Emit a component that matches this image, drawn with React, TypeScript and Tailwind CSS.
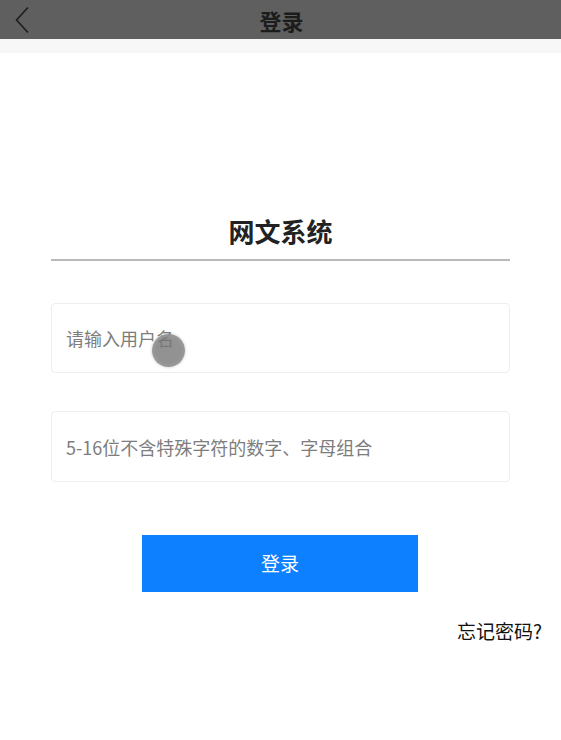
import React from 'react';

const font = { fontFamily: '"Noto Sans CJK SC", "Noto Sans", sans-serif' };

export default function App() {
  return (
    <div className="relative w-[561px] h-[740px] bg-white overflow-hidden" style={font}>
      {/* Header */}
      <div className="relative h-[39px] bg-[#5f5f5f] flex items-center justify-center">
        <button className="absolute left-[13px] top-[6px] w-[18px] h-[27px] flex items-center justify-center">
          <svg width="14" height="26" viewBox="0 0 14 26" fill="none">
            <path d="M12.5 1 L1.5 13 L12.5 25" stroke="#1c1c1c" strokeWidth="1.6" strokeLinecap="round" strokeLinejoin="round" />
          </svg>
        </button>
        <h1 className="ml-[2px] text-[22px] font-bold text-[#1c1c1c] leading-none">登录</h1>
      </div>
      <div className="h-[14px] bg-[#f7f7f7]" />

      <div className="px-[51px]">
        {/* Title */}
        <div className="mt-[160px] pb-[10px] border-b-2 border-[#bababa]">
          <h2 className="h-[36px] leading-[36px] text-center text-[26px] font-bold text-[#222]">网文系统</h2>
        </div>

        {/* Inputs */}
        <input
          className="mt-[42px] block w-full h-[70px] px-[14px] border border-[#eeeeee] rounded-[4px] text-[18px] text-[#333] placeholder:text-[#7d7d7d] outline-none"
          placeholder="请输入用户名"
        />
        <input
          type="password"
          className="mt-[38px] block w-full h-[71px] px-[14px] border border-[#eeeeee] rounded-[4px] text-[18px] text-[#333] placeholder:text-[#7d7d7d] outline-none"
          placeholder="5-16位不含特殊字符的数字、字母组合"
        />
      </div>

      {/* Submit */}
      <div className="mt-[53px] flex justify-center">
        <button className="ml-[-1px] w-[276px] h-[57px] bg-[#0c80fe] text-white text-[19px]">登录</button>
      </div>

      <div className="mt-[25px] pr-[19px] flex justify-end">
        <a className="text-[19px] leading-[28px] text-[#111]">忘记密码?</a>
      </div>

      {/* Touch indicator */}
      <div className="absolute left-[152px] top-[334px] w-[33px] h-[33px] rounded-full bg-[#777777]/80 border-[3px] border-[#9a9a9a]/70 shadow-[0_0_3px_rgba(0,0,0,0.25)]" />
    </div>
  );
}
